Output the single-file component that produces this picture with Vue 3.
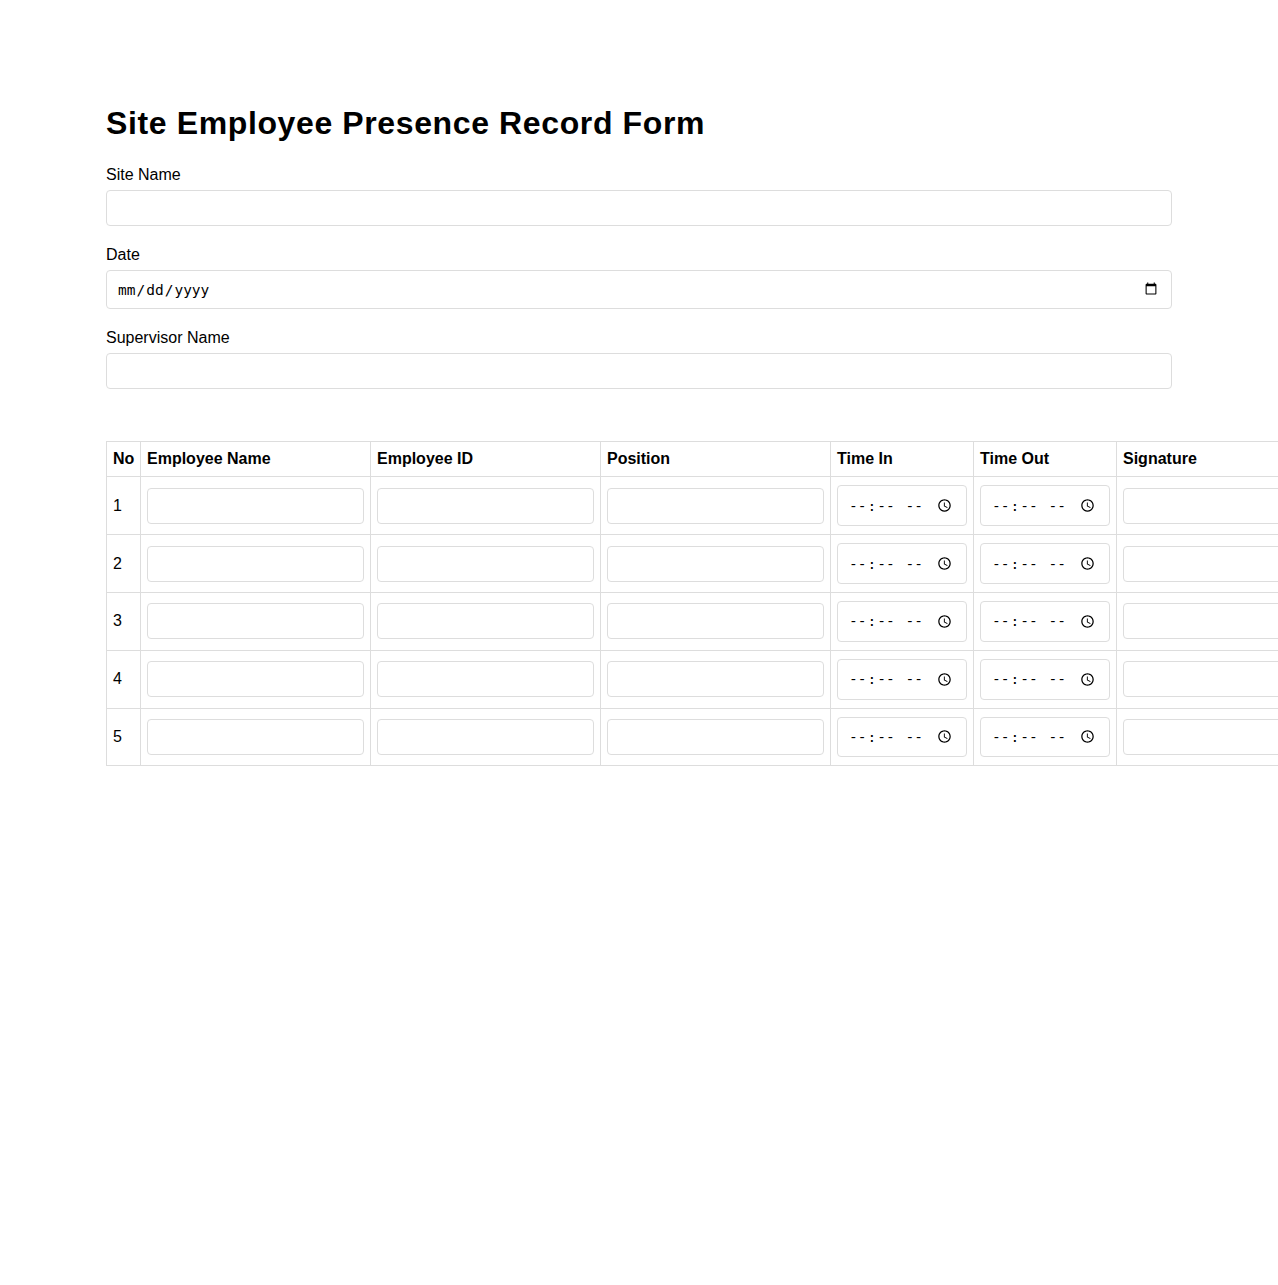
<template>
  <div class="page">
    <h1>Site Employee Presence Record Form</h1>

    <div class="field">
      <label>Site Name</label>
      <input type="text" />
    </div>
    <div class="field">
      <label>Date</label>
      <input type="date" />
    </div>
    <div class="field">
      <label>Supervisor Name</label>
      <input type="text" />
    </div>

    <table>
      <colgroup>
        <col class="c-no" />
        <col class="c-wide" />
        <col class="c-wide" />
        <col class="c-wide" />
        <col class="c-time" />
        <col class="c-time" />
        <col class="c-wide" />
      </colgroup>
      <thead>
        <tr>
          <th>No</th>
          <th>Employee Name</th>
          <th>Employee ID</th>
          <th>Position</th>
          <th>Time In</th>
          <th>Time Out</th>
          <th>Signature</th>
        </tr>
      </thead>
      <tbody>
        <tr v-for="n in 5" :key="n">
          <td>{{ n }}</td>
          <td><input type="text" /></td>
          <td><input type="text" /></td>
          <td><input type="text" /></td>
          <td><input type="time" /></td>
          <td><input type="time" /></td>
          <td><input type="text" /></td>
        </tr>
      </tbody>
    </table>
  </div>
</template>

<script setup>
</script>

<style>
html, body {
  overflow-x: hidden;
}
</style>

<style scoped>
.page {
  font-family: "Liberation Sans", Arial, sans-serif;
  font-size: 16px;
  color: #000;
  padding: 80px 106px;
}

h1 {
  font-size: 32px;
  font-weight: 700;
  letter-spacing: 0.62px;
  line-height: 37px;
  margin: 25px 0 24px;
}

.field {
  margin-bottom: 20px;
}

label {
  display: block;
  line-height: 18px;
  margin-bottom: 6px;
}

input {
  box-sizing: border-box;
  width: 100%;
  height: 36px;
  padding: 10px 11px 10px 10px;
  border: 1px solid #ddd;
  border-radius: 4px;
  background: #fff;
  font-size: 14.5px;
}

input[type="date"] {
  height: 39px;
}

input[type="time"] {
  height: 40.8px;
}

table {
  border-collapse: collapse;
  table-layout: fixed;
  width: 1210px;
  margin-top: 52.35px;
}

.c-no { width: 34px; }
.c-wide { width: 230px; }
.c-time { width: 143px; }

th, td {
  border: 1px solid #ddd;
  padding: 8px 6px;
  text-align: left;
}
</style>
